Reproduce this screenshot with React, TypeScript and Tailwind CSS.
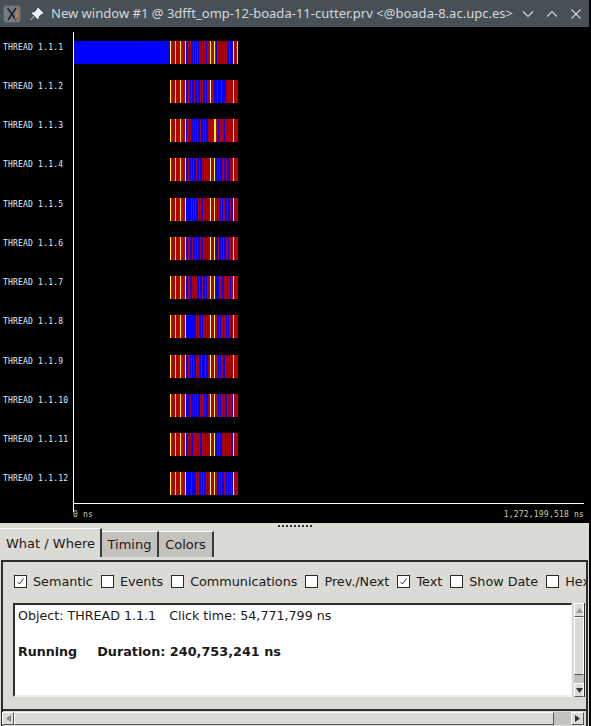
const P = "yrrrryrrrryrrrry";
const rows: [string, string][] = [
  ["THREAD 1.1.1", P + "bbrbrbbrbrbrbrrbrbrrbrrr" + "yrrry" + "rbrrbrbrbrbrbbrbbb" + "yrrry"],
  ["THREAD 1.1.2", P + "bbrrbrbbrbbrbbrbrbbrbrrr" + "wrrrb" + "bbrbbbrbbbbrrrrrrr" + "yrrrr"],
  ["THREAD 1.1.3", P + "brrbrbbrbrbrbbrbbrbrbbrr" + "rrrry" + "yrrbrrrrrbrrrrrrrr" + "yrrrr"],
  ["THREAD 1.1.4", P + "bbrbbrbrbbrbbrbbrbrbrrrr" + "wrrry" + "bbrbrbbrrbbrbbbrbr" + "yrrrr"],
  ["THREAD 1.1.5", P + "bbbbbrbrbrbbrbrbbrrbrbrr" + "wrrry" + "brbrrbrbrrbbrbbrbb" + "yrrrr"],
  ["THREAD 1.1.6", P + "bbrrbbrbbrbrbbrbbrrbrbrr" + "wrrry" + "bbbrbbrbrbbrrbrrbr" + "yrrrr"],
  ["THREAD 1.1.7", P + "bbrrbbrbrbrbbrbbrbbrbrrr" + "wrrry" + "bbbbrrrbbrrrbrrbrr" + "yrrrr"],
  ["THREAD 1.1.8", P + "bbbbbbbbbbrbrbbrbrrbrbrr" + "wrrry" + "brbbrbrrbrrbrbrrbr" + "yrrrr"],
  ["THREAD 1.1.9", P + "bbrrbrbrbbrbrbbrbbbrbbrr" + "wrrry" + "brrbrbrrbbrrbrbrbr" + "yrrrr"],
  ["THREAD 1.1.10", P + "bbbbrbbrbrbrbbrbrrbrbbrr" + "wrrry" + "brrbrbrrbrbbrrbrrb" + "yrrrr"],
  ["THREAD 1.1.11", P + "bbrbrbbrrrrrrrbbrrrbrbrr" + "wrrry" + "bbrbrbbrrrbrbrbrbb" + "yrrrr"],
  ["THREAD 1.1.12", P + "bbbbbrbbbbrbrbbrbrbbrbrr" + "wrrry" + "brbbrbrbbrrbrbrbrb" + "yrrrr"],
];
const C: Record<string, string> = { y: "#ffff00", r: "#b30000", b: "#0000ff", w: "#ffffcc" };

function Bar({ s }: { s: string }) {
  return (
    <svg width={68} height={23} viewBox="0 0 68 23" shapeRendering="crispEdges" className="block">
      {s.split("").map((c, i) => (
        <rect key={i} x={i} y={0} width={1} height={23} fill={C[c]} />
      ))}
    </svg>
  );
}

function Row({ label, s, i }: { label: string; s: string; i: number }) {
  return (
    <div className="flex h-[39.25px] items-start">
      <div className="w-[73px] shrink-0 pl-[3px] text-[8px] leading-[13px] tracking-[0.2px] text-[#dfeeff] font-['DejaVu_Sans_Mono',monospace] whitespace-pre">{label}</div>
      <div className="w-[1px] self-stretch bg-white" />
      <div className={`${i === 0 ? "w-[96px] bg-[#0000ff]" : "w-[96px]"} h-[23px] shrink-0`} />
      <Bar s={s} />
    </div>
  );
}

function Check({ label, on }: { label: string; on?: boolean }) {
  return (
    <div className="flex shrink-0 items-center gap-[6px]">
      <div className="flex h-[13px] w-[13px] items-center justify-center border border-[#2a2a28] bg-white">
        {on && (
          <svg width="9" height="9" viewBox="0 0 9 9">
            <path d="M1.5 5 L3.5 7 L7.5 1.5" fill="none" stroke="#333" strokeWidth="1" />
          </svg>
        )}
      </div>
      <span>{label}</span>
    </div>
  );
}

function Arrow({ d }: { d: string }) {
  return (
    <svg width="7" height="7" viewBox="0 0 7 7">
      <path d={d} fill="currentColor" />
    </svg>
  );
}

export default function App() {
  return (
    <div className="relative h-[726px] w-[591px] overflow-hidden bg-black font-['DejaVu_Sans',sans-serif]">
      <div className="w-[589px]">
        {/* Title bar */}
        <div className="flex h-[27px] items-center bg-[#475057] text-[#d5d8da]">
          <svg width="18" height="18" viewBox="0 0 18 18" className="ml-[3px] shrink-0">
            <rect x="0.5" y="0.5" width="17" height="17" rx="3" fill="#767b80" stroke="#5a6066" />
            <path d="M4.5 3 L13 15 M13 3 L5 15" stroke="#1f2226" strokeWidth="1.6" />
            <path d="M13 5 Q16 9 12 14" fill="none" stroke="#e07a3a" strokeWidth="1.3" />
          </svg>
          <svg width="14" height="14" viewBox="0 0 14 14" className="ml-[9px] shrink-0">
            <path d="M8 1 L13 6 L11 7 L8.5 9.5 L8 12 L2 6 L4.5 5.5 L7 3 Z M4 9 L1 13" fill="#f2f3f4" stroke="#f2f3f4" strokeWidth="0.8" />
          </svg>
          <span className="ml-[7px] whitespace-pre text-[13px] tracking-[0.015px] font-['Noto_Sans',sans-serif]">New window #1 @ 3dfft_omp-12-boada-11-cutter.prv &lt;@boada-8.ac.upc.es&gt;</span>
          <div className="ml-auto flex items-center gap-[10px] pr-[6px]">
            <svg width="14" height="14" viewBox="0 0 14 14"><path d="M2 4.5 L7 9.5 L12 4.5" fill="none" stroke="#d5d8da" strokeWidth="1.1" /></svg>
            <svg width="14" height="14" viewBox="0 0 14 14"><path d="M2 9.5 L7 4.5 L12 9.5" fill="none" stroke="#d5d8da" strokeWidth="1.1" /></svg>
            <svg width="14" height="14" viewBox="0 0 14 14"><path d="M2.5 2.5 L11.5 11.5 M11.5 2.5 L2.5 11.5" stroke="#d5d8da" strokeWidth="1.1" /></svg>
          </div>
        </div>

        {/* Chart */}
        <div className="h-[496px] bg-black pt-[5px]">
          <div className="flex h-[8.6px]">
            <div className="ml-[73px] w-[1px] bg-white" />
          </div>
          <div>
            {rows.map(([label, s], i) => (
              <Row key={label} label={label} s={s} i={i} />
            ))}
          </div>
          <div className="ml-[73px] -mt-[8.6px] h-[1px] w-[511px] bg-white" />
          <div className="mt-[6px] flex w-[584px] justify-between pl-[73px] text-[8px] leading-[10px] tracking-[0.2px] text-[#cfcca6] font-['DejaVu_Sans_Mono',monospace]">
            <span>0 ns</span>
            <span>1,272,199,518 ns</span>
          </div>
        </div>

        {/* Lower panel */}
        <div className="flex h-[203px] flex-col bg-[#dcdad5] text-[13px] text-[#1a1a1a]">
          <div className="flex h-[5px] justify-center gap-[2px] pt-[2px]">
            {Array.from({ length: 9 }).map((_, i) => (
              <div key={i} className="h-[2px] w-[2px] bg-[#333]" />
            ))}
          </div>
          <div className="flex h-[29px] items-end">
            <div className="flex h-[29px] w-[102px] items-center justify-center border-t border-t-white border-r-2 border-r-[#3a3a38] pl-[1px] pt-[2px]">What / Where</div>
            <div className="flex h-[26px] w-[57px] items-center justify-center border-t border-t-white border-r-2 border-r-[#3a3a38] bg-[#c4c2bd]">Timing</div>
            <div className="flex h-[26px] w-[55px] items-center justify-center border-t border-t-white border-r-2 border-r-[#3a3a38] bg-[#c4c2bd]">Colors</div>
          </div>
          <div className="mx-[1px] mt-[3px] flex min-h-0 flex-1 flex-col border-t-2 border-l-2 border-r-2 border-[#2e2e2c]">
            <div className="flex h-[41px] w-[583px] items-center gap-[8px] overflow-hidden pl-[11px] pb-[2px] whitespace-pre text-[12.78px]">
              <Check label="Semantic" on />
              <Check label="Events" />
              <Check label="Communications" />
              <Check label="Prev./Next" />
              <Check label="Text" on />
              <Check label="Show Date" />
              <Check label="Hex" />
            </div>
            <div className="ml-[10px] mr-[1px] flex h-[94px]">
              <div className="w-[561px] border-t-2 border-l-2 border-[#2e2e2c] border-b-2 border-b-[#eeeeea] border-r border-r-[#eeeeea] bg-white pl-[3px] pt-[2px] text-[12.67px] leading-[18px] whitespace-pre">
                <div className="flex">
                  <span>Object: THREAD 1.1.1</span>
                  <span className="ml-[13px]">Click time: 54,771,799 ns</span>
                </div>
                <div className="h-[18px]" />
                <div className="flex font-bold">
                  <span>Running</span>
                  <span className="ml-[20px] text-[12.8px]">Duration: 240,753,241 ns</span>
                </div>
              </div>
              <div className="ml-[2px] flex w-[11px] flex-col border-r border-[#2e2e2c] text-[#333]">
                <div className="flex h-[14px] items-center justify-center border border-white border-b-[#555] bg-[#dcdad5] text-[#999]"><Arrow d="M3.5 1 L7 6 L0 6 Z" /></div>
                <div className="h-[58px] border border-white border-b-[#555] bg-[#dcdad5]" />
                <div className="h-[8px] bg-[#c4c2bd]" />
                <div className="flex h-[14px] items-center justify-center border border-white border-b-[#555] bg-[#dcdad5]"><Arrow d="M0 1 L7 1 L3.5 6 Z" /></div>
              </div>
            </div>
            <div className="-mx-[2px] mt-[12px] flex h-[15px] border-t-2 border-[#2e2e2c] px-[1px] pt-[1px] text-[#333]">
              <div className="flex h-[13px] w-[12px] items-center justify-center border border-white border-r-[#555] border-b-[#555] text-[#888]"><Arrow d="M1 3.5 L6 0 L6 7 Z" /></div>
              <div className="h-[13px] w-[540px] border border-white border-r-[#555] border-b-[#555]" />
              <div className="h-[13px] w-[17px] bg-[#c4c2bd]" />
              <div className="flex h-[13px] w-[13px] items-center justify-center border border-white border-r-[#555] border-b-[#555]"><Arrow d="M1 0 L6 3.5 L1 7 Z" /></div>
            </div>
          </div>
        </div>
      </div>
    </div>
  );
}
